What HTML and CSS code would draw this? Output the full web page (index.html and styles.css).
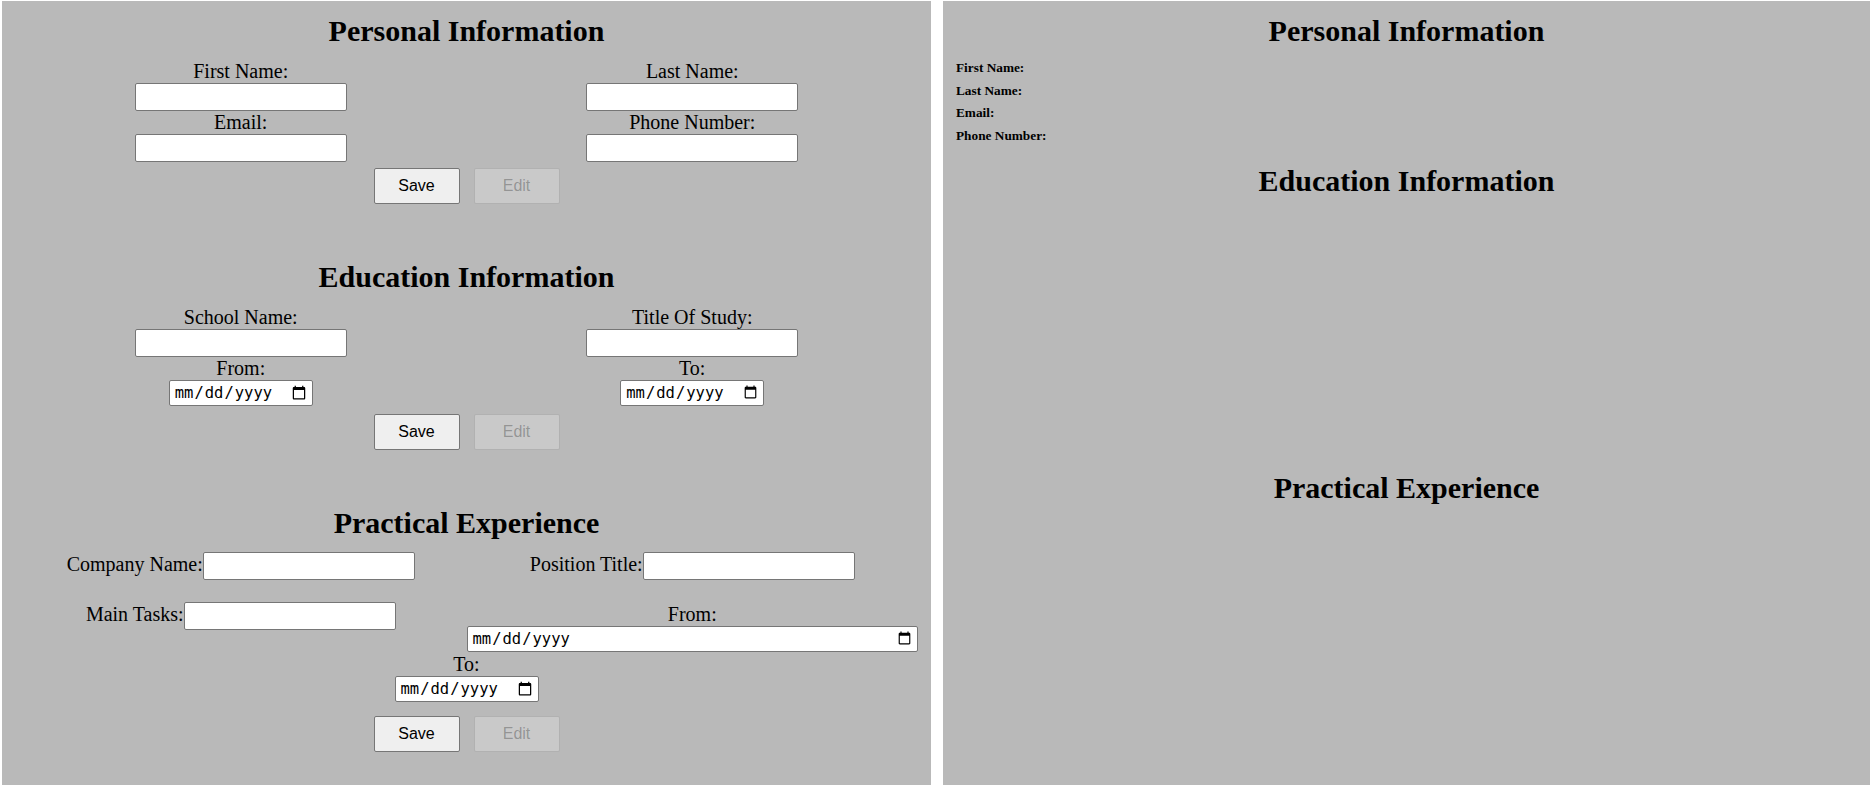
FILE: index.html
```html
<!DOCTYPE html>
<html lang="en">
<head>
<meta charset="utf-8">
<title>CV Builder</title>
<link rel="stylesheet" href="styles.css">
</head>
<body>
<div class="app">
  <div class="panel editor">
    <section class="form-section">
      <h2 class="section-title">Personal Information</h2>
      <div class="field-grid">
        <div class="field"><label>First Name:</label><input class="text-input" type="text"></div>
        <div class="field"><label>Last Name:</label><input class="text-input" type="text"></div>
        <div class="field"><label>Email:</label><input class="text-input" type="email"></div>
        <div class="field"><label>Phone Number:</label><input class="text-input" type="tel"></div>
      </div>
      <div class="actions actions-personal">
        <button class="btn" type="button">Save</button>
        <button class="btn" type="button" disabled>Edit</button>
      </div>
    </section>

    <section class="form-section">
      <h2 class="section-title">Education Information</h2>
      <div class="field-grid">
        <div class="field"><label>School Name:</label><input class="text-input" type="text"></div>
        <div class="field"><label>Title Of Study:</label><input class="text-input" type="text"></div>
        <div class="field"><label>From:</label><input class="date-input" type="date"></div>
        <div class="field"><label>To:</label><input class="date-input" type="date"></div>
      </div>
      <div class="actions actions-education">
        <button class="btn" type="button">Save</button>
        <button class="btn" type="button" disabled>Edit</button>
      </div>
    </section>

    <section class="form-section">
      <h2 class="section-title">Practical Experience</h2>
      <div class="exp-grid">
        <div class="inline-field"><label>Company Name:</label><input class="text-input" type="text"></div>
        <div class="inline-field"><label>Position Title:</label><input class="text-input" type="text"></div>
        <div class="inline-field"><label>Main Tasks:</label><input class="text-input" type="text"></div>
        <div class="stack-field"><label>From:</label><input class="date-input date-wide" type="date"></div>
      </div>
      <div class="field to-field"><label>To:</label><input class="date-input" type="date"></div>
      <div class="actions actions-experience">
        <button class="btn" type="button">Save</button>
        <button class="btn" type="button" disabled>Edit</button>
      </div>
    </section>
  </div>

  <div class="panel preview">
    <section class="preview-section">
      <h2 class="section-title">Personal Information</h2>
      <div class="preview-list">
        <p class="preview-item">First Name:</p>
        <p class="preview-item">Last Name:</p>
        <p class="preview-item">Email:</p>
        <p class="preview-item">Phone Number:</p>
      </div>
    </section>
    <section class="preview-section">
      <h2 class="section-title">Education Information</h2>
      <div class="preview-empty"></div>
    </section>
    <section class="preview-section">
      <h2 class="section-title">Practical Experience</h2>
    </section>
  </div>
</div>
</body>
</html>
```

FILE: styles.css
```css
html, body {
  margin: 0;
  background: #ffffff;
}

body {
  font-family: "Liberation Serif", "Times New Roman", serif;
  font-size: 20px;
  color: #000;
}

.app {
  display: grid;
  grid-template-columns: 929px 1fr;
  column-gap: 12px;
  padding: 1px 0 1px 2px;
  height: 786px;
  box-sizing: border-box;
  overflow: hidden;
}

.panel {
  background: #b9b9b9;
  padding: 0 13px;
  overflow: hidden;
}

.section-title {
  font-size: 30px;
  line-height: 34px;
  font-weight: bold;
  text-align: center;
  margin: 13px 0 12px;
}

.form-section {
  padding-bottom: 43px;
}

.field-grid {
  display: grid;
  grid-template-columns: 1fr 1fr;
}

.field {
  display: flex;
  flex-direction: column;
  align-items: center;
}

.field label,
.inline-field label,
.stack-field label {
  line-height: 23px;
}

.text-input {
  box-sizing: border-box;
  width: 212px;
  height: 28px;
  margin: 0;
  background: #fff;
  border: 1px solid #767676;
  border-radius: 2px;
  padding: 1px 2px;
}

.date-input {
  box-sizing: border-box;
  width: 144px;
  height: 26px;
  margin: 0;
  padding: 0 3px 0 4px;
  font-size: 15.5px;
  background: #fff;
  border: 1px solid #767676;
  border-radius: 2px;
}

.actions {
  display: flex;
  justify-content: center;
  gap: 14px;
}

.actions-personal { margin-top: 6px; }
.actions-education { margin-top: 8px; }
.actions-experience { margin-top: 14px; }

.btn {
  box-sizing: border-box;
  width: 86px;
  height: 36px;
  margin: 0;
  font-family: "Liberation Sans", Arial, sans-serif;
  font-size: 16px;
  color: #000;
  background: #efefef;
  border: 1px solid #767676;
  border-radius: 2px;
}

.btn:disabled {
  color: rgba(16, 16, 16, 0.3);
  background: rgba(239, 239, 239, 0.3);
  border-color: rgba(118, 118, 118, 0.3);
}

.exp-grid {
  display: grid;
  grid-template-columns: 1fr 1fr;
  row-gap: 22px;
  align-items: baseline;
}

.inline-field {
  display: flex;
  justify-content: center;
  align-items: baseline;
}

.stack-field {
  display: flex;
  flex-direction: column;
  align-items: stretch;
  text-align: center;
}

.date-wide {
  width: 100%;
}

.to-field {
  margin-top: 1px;
}

.preview-list {
  padding-bottom: 1px;
}

.preview-item {
  font-size: 13.3px;
  line-height: 15px;
  font-weight: bold;
  margin: 0 0 7.5px;
}

.preview-empty {
  height: 248px;
}
```
